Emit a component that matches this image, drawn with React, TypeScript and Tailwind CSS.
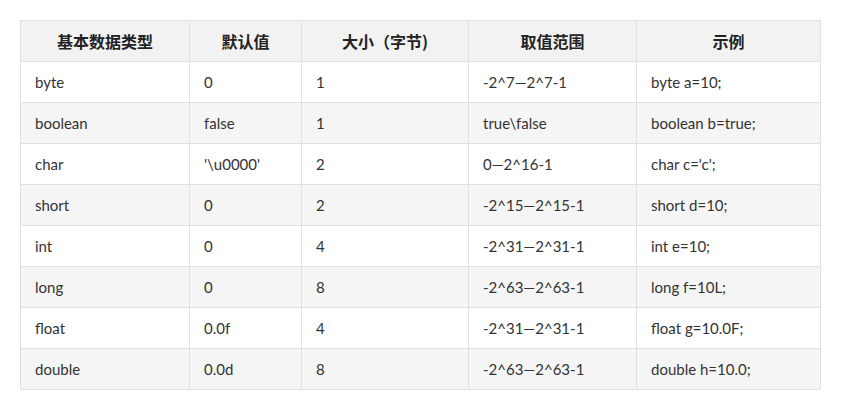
import React from "react";

const rows: string[][] = [
  ["byte", "0", "1", "-2^7—2^7-1", "byte a=10;"],
  ["boolean", "false", "1", "true\\false", "boolean b=true;"],
  ["char", "'\\u0000'", "2", "0—2^16-1", "char c='c';"],
  ["short", "0", "2", "-2^15—2^15-1", "short d=10;"],
  ["int", "0", "4", "-2^31—2^31-1", "int e=10;"],
  ["long", "0", "8", "-2^63—2^63-1", "long f=10L;"],
  ["float", "0.0f", "4", "-2^31—2^31-1", "float g=10.0F;"],
  ["double", "0.0d", "8", "-2^63—2^63-1", "double h=10.0;"],
];

const headers = ["基本数据类型", "默认值", "大小（字节)", "取值范围", "示例"];
const widths = ["w-[169px]", "w-[112px]", "w-[167px]", "w-[168px]", "w-[184px]"];

export default function App() {
  return (
    <div className="w-[845px] h-[404px] bg-white pt-[20px] pl-[20px]" style={{ fontFamily: '"Lato", "Noto Sans CJK SC", sans-serif' }}>
      <table className="border-collapse table-fixed w-[801px] text-[15px] text-[#333333]">
        <colgroup>
          {widths.map((w, i) => (
            <col key={i} className={w} />
          ))}
        </colgroup>
        <thead>
          <tr className="h-[41px] bg-[#f2f2f2]">
            {headers.map((h, i) => (
              <th key={i} className="border border-[#dfe2e5] text-center font-bold text-[16px] text-[#222] p-0" style={{ fontFamily: '"Noto Sans CJK SC", sans-serif' }}>
                {h}
              </th>
            ))}
          </tr>
        </thead>
        <tbody>
          {rows.map((r, i) => (
            <tr key={i} className={`h-[41px] ${i % 2 === 1 ? "bg-[#f5f5f5]" : "bg-white"}`}>
              {r.map((c, j) => (
                <td key={j} className="border border-[#dfe2e5] pl-[14px] py-0 text-left">
                  {c}
                </td>
              ))}
            </tr>
          ))}
        </tbody>
      </table>
    </div>
  );
}
